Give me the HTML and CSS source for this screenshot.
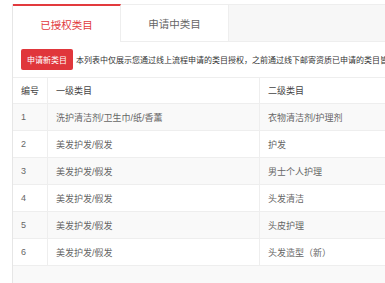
FILE: index.html
```html
<!DOCTYPE html>
<html lang="zh-CN">
<head>
    <meta charset="UTF-8">
    <meta name="viewport" content="width=device-width, initial-scale=1.0">
    <title>类目管理</title>
    <link rel="stylesheet" href="styles.css">
</head>
<body>
    <div class="page">
        <div class="panel">
            <div class="tabs">
                <div class="tab active">已授权类目</div>
                <div class="tab">申请中类目</div>
            </div>

            <div class="toolbar">
                <button class="btn-apply">申请新类目</button>
                <span class="notice">本列表中仅展示您通过线上流程申请的类目授权，之前通过线下邮寄资质已申请的类目皆不在此列表中展示</span>
            </div>

            <table class="cat-table">
                <thead>
                    <tr>
                        <th class="col-no">编号</th>
                        <th class="col-first">一级类目</th>
                        <th>二级类目</th>
                    </tr>
                </thead>
                <tbody>
                    <tr><td>1</td><td>洗护清洁剂/卫生巾/纸/香薰</td><td>衣物清洁剂/护理剂</td></tr>
                    <tr><td>2</td><td>美发护发/假发</td><td>护发</td></tr>
                    <tr><td>3</td><td>美发护发/假发</td><td>男士个人护理</td></tr>
                    <tr><td>4</td><td>美发护发/假发</td><td>头发清洁</td></tr>
                    <tr><td>5</td><td>美发护发/假发</td><td>头皮护理</td></tr>
                    <tr><td>6</td><td>美发护发/假发</td><td>头发造型（新）</td></tr>
                </tbody>
            </table>
            <div class="panel-foot"></div>
        </div>
    </div>
</body>
</html>
```

FILE: styles.css
```css
body {
    margin: 0;
    background-color: #fff;
    font-family: "Liberation Sans", "Noto Sans CJK SC", sans-serif;
    overflow: hidden;
}
.page {
    padding: 4px 0 0 12px;
}
.panel {
    width: 470px;
    border-left: 1px solid #e6e6e6;
    border-bottom: 3px solid #d9d9d9;
}
.tabs {
    display: flex;
    height: 38px;
    background-color: #f7f7f7;
    border-top: 1px solid #eee;
    border-bottom: 1px solid #eee;
    box-sizing: border-box;
}
.tab {
    width: 108px;
    display: flex;
    justify-content: center;
    align-items: center;
    font-size: 10.5px;
    color: #666;
    background-color: #fff;
    border-right: 1px solid #eee;
    box-sizing: border-box;
}
.tab.active {
    color: #e23a3e;
    border-top: 2px solid #e23a3e;
    margin-top: -1px;
    margin-bottom: -1px;
}
.toolbar {
    display: flex;
    align-items: center;
    height: 35px;
    padding-left: 8px;
    white-space: nowrap;
}
.btn-apply {
    height: 21px;
    padding: 0 6px;
    border: none;
    border-radius: 2px;
    background-color: #e0363b;
    color: #fff;
    font-family: inherit;
    font-size: 8px;
    cursor: pointer;
}
.notice {
    margin-left: 3px;
    font-size: 8px;
    color: #333;
}
.cat-table {
    width: 100%;
    border-collapse: collapse;
    font-size: 9px;
    color: #666;
}
.cat-table th,
.cat-table td {
    text-align: left;
    padding: 0 8px;
    border-top: 1px solid #eee;
    border-right: 1px solid #eee;
}
.cat-table th {
    height: 25px;
    font-weight: normal;
    color: #444;
}
.cat-table td {
    height: 26px;
}
.cat-table tbody tr:nth-child(odd) {
    background-color: #f9f9f9;
}
.col-no {
    width: 18px;
}
.col-first {
    width: 195px;
}
.panel-foot {
    height: 21px;
    background-color: #f9f9f9;
    border-top: 1px solid #eee;
}
```
